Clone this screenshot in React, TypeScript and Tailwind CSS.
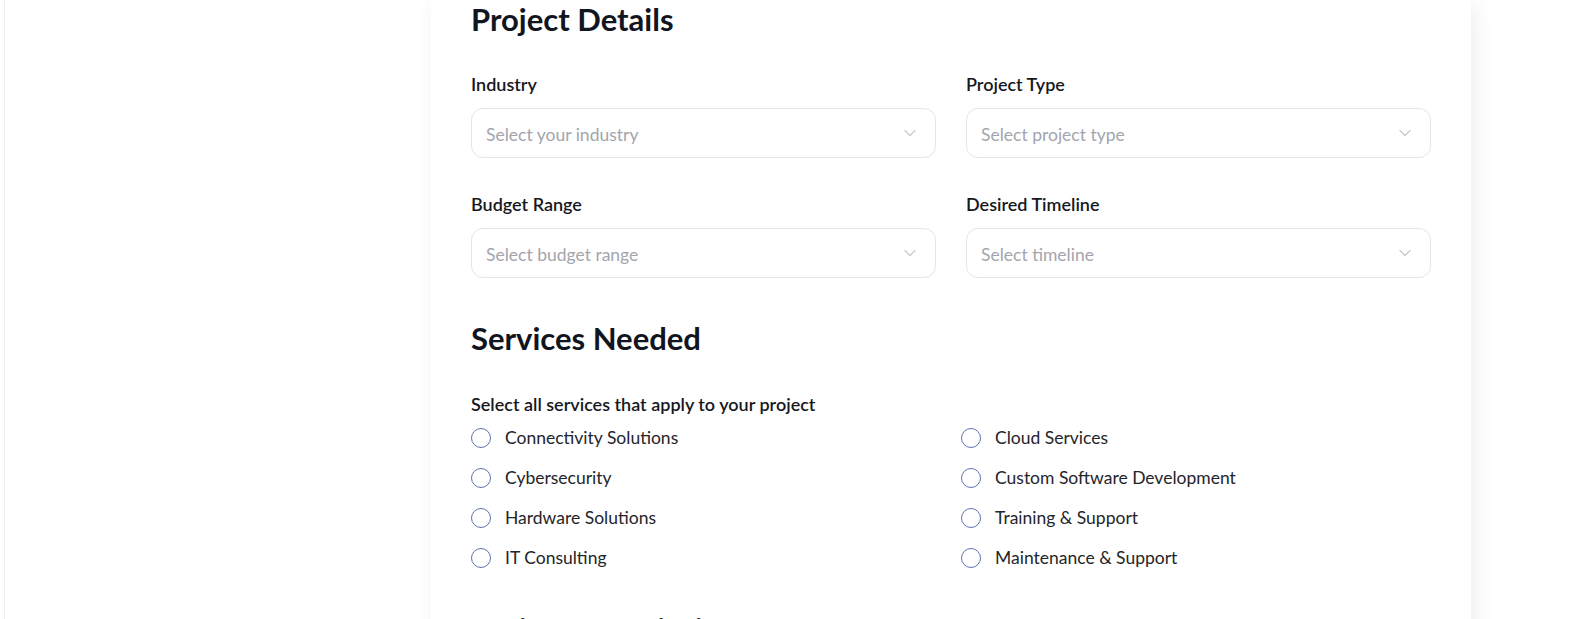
import React from "react";

const Chevron = () => (
  <svg width="20" height="20" viewBox="0 0 24 24" fill="none" stroke="#c9cbd3" strokeWidth="1.5" strokeLinecap="round" strokeLinejoin="round">
    <path d="m6 9 6 6 6-6" />
  </svg>
);

const Field = ({ label, placeholder }: { label: string; placeholder: string }) => (
  <div className="flex flex-col">
    <label className="text-[18px] leading-[24px] font-semibold text-[#16181d]">{label}</label>
    <div className="mt-[12px] h-[50px] rounded-xl border border-[#e4e5ea] bg-white flex items-center justify-between pl-[14px] pr-[15px]">
      <span className="text-[17.5px] leading-[24px] pt-[3px] text-[#a3a5ae]">{placeholder}</span>
      <Chevron />
    </div>
  </div>
);

const Radio = ({ label }: { label: string }) => (
  <div className="flex items-center gap-[14px] h-[20px]">
    <span className="w-[20px] h-[20px] rounded-full border-[1.5px] border-[#5f72b0] shrink-0" />
    <span className="text-[17.5px] text-[#24252a] font-normal">{label}</span>
  </div>
);

export default function App() {
  const left = ["Connectivity Solutions", "Cybersecurity", "Hardware Solutions", "IT Consulting"];
  const right = ["Cloud Services", "Custom Software Development", "Training & Support", "Maintenance & Support"];
  const services: string[] = [];
  for (let i = 0; i < 4; i++) {
    services.push(left[i], right[i]);
  }
  return (
    <div className="h-[619px] overflow-hidden bg-white pl-[4px] flex" style={{ fontFamily: "Lato, 'Noto Sans', sans-serif" }}>
      <div className="w-px bg-[#f1ecee] shrink-0" />
      <div className="ml-[426px] w-[1040px] shrink-0 bg-white shadow-[4px_4px_20px_rgba(0,0,0,0.07)] px-10 pt-[2px] h-[720px]">
        <h2 className="text-[31px] leading-[34px] font-bold text-[#111520]">Project Details</h2>
        <div className="mt-[36px] grid grid-cols-2 gap-x-[30px] gap-y-[34px]">
          <Field label="Industry" placeholder="Select your industry" />
          <Field label="Project Type" placeholder="Select project type" />
          <Field label="Budget Range" placeholder="Select budget range" />
          <Field label="Desired Timeline" placeholder="Select timeline" />
        </div>
        <h2 className="mt-[40px] text-[31px] leading-[40px] font-bold text-[#111520]">Services Needed</h2>
        <p className="mt-[34px] text-[18px] leading-[24px] font-semibold text-[#16181d]">Select all services that apply to your project</p>
        <div className="mt-[12px] grid grid-cols-2 gap-x-[20px] gap-y-[20px]">
          {services.map((s) => (
            <Radio key={s} label={s} />
          ))}
        </div>
        <h2 className="mt-[41px] text-[31px] leading-[40px] font-bold text-[#111520]">Project Description</h2>
      </div>
    </div>
  );
}
